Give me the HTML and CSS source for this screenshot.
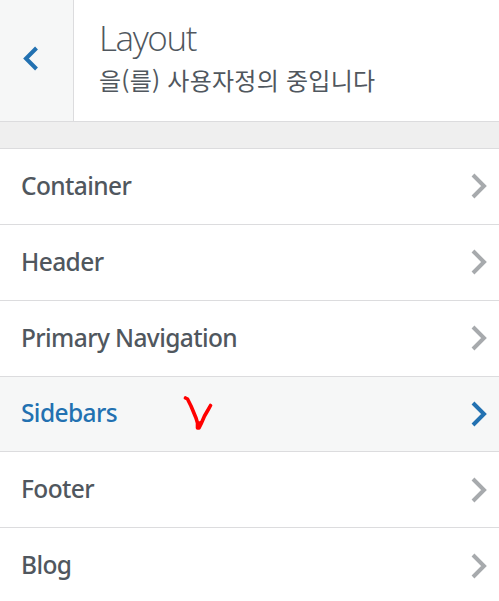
FILE: index.html
```html
<!DOCTYPE html>
<html lang="ko">
    <head>
       <meta charset="utf-8">
       <title>Layout</title>
       <link rel="stylesheet" href="styles.css">
    </head>
    <body>
       <!-- panel header -->
       <div class="header">
          <button class="back" type="button" aria-label="Back">
             <svg width="16" height="26" viewBox="0 0 16 26"><path d="M13.5 2L3 12.5L13.5 23"/></svg>
          </button>
          <div class="heading">
             <h1>Layout</h1>
             <p>을(를) 사용자정의 중입니다</p>
          </div>
       </div>
       <!-- sections -->
       <ul class="sections">
          <li>
             <span>Container</span>
             <svg class="arrow" width="16" height="26" viewBox="0 0 16 26"><path d="M2 2L13 13L2 24"/></svg>
          </li>
          <li>
             <span>Header</span>
             <svg class="arrow" width="16" height="26" viewBox="0 0 16 26"><path d="M2 2L13 13L2 24"/></svg>
          </li>
          <li>
             <span>Primary Navigation</span>
             <svg class="arrow" width="16" height="26" viewBox="0 0 16 26"><path d="M2 2L13 13L2 24"/></svg>
          </li>
          <li class="active">
             <span>Sidebars</span>
             <svg class="mark" width="32" height="36" viewBox="0 0 32 36"><path d="M3.5 2L5.5 3L9 10L14 22L15.5 27V32H17L19 28L22.500 20L26 14L28.5 9.500M15.500 27L18 27"/></svg>
             <svg class="arrow" width="16" height="26" viewBox="0 0 16 26"><path d="M2 2L13 13L2 24"/></svg>
          </li>
          <li>
             <span>Footer</span>
             <svg class="arrow" width="16" height="26" viewBox="0 0 16 26"><path d="M2 2L13 13L2 24"/></svg>
          </li>
          <li>
             <span>Blog</span>
             <svg class="arrow" width="16" height="26" viewBox="0 0 16 26"><path d="M2 2L13 13L2 24"/></svg>
          </li>
       </ul>
    </body>
</html>
```

FILE: styles.css
```css
*
{
   margin: 0;
   padding: 0;
   box-sizing: border-box;
}
body
{
   background-color: #efefef;
   color: #50575e;
   font-family: "Noto Sans", "Noto Sans CJK KR", sans-serif;
   overflow: hidden;
}
svg
{
   display: block;
   fill: none;
}
.header
{
   display: flex;
   height: 122px;
   background-color: #fff;
   border-bottom: 1px solid #dcdcde;
}
.back
{
   display: flex;
   align-items: center;
   width: 74px;
   padding: 0 0 4px 23px;
   background-color: #f6f7f7;
   border: none;
   border-right: 1px solid #dcdcde;
}
.back svg
{
   stroke: #2271b1;
   stroke-width: 4;
}
.heading
{
   padding: 16px 0 0 25px;
}
h1
{
   font-family: "Open Sans", sans-serif;
   font-size: 35px;
   font-weight: 300;
   letter-spacing: -1.4px;
   line-height: 44px;
}
.heading p
{
   font-family: "Noto Sans CJK KR", sans-serif;
   font-size: 24px;
   letter-spacing: 0.25px;
   line-height: 40px;
   white-space: nowrap;
}
.sections
{
   margin-top: 26px;
   list-style: none;
   border-top: 1px solid #dcdcde;
}
.sections li
{
   display: flex;
   align-items: center;
   height: 75.85px;
   padding: 0 12px 0 21px;
   background-color: #fff;
   border-bottom: 1px solid #dcdcde;
   font-size: 24.5px;
   font-weight: 500;
   letter-spacing: -0.6px;
}
.sections span
{
   padding-bottom: 2px;
}
.arrow
{
   margin-left: auto;
   stroke: #a7aaad;
   stroke-width: 4;
}
.sections .active
{
   background-color: #f6f7f7;
   color: #2271b1;
}
.active .arrow
{
   stroke: #2271b1;
}
.mark
{
   margin-left: 65px;
   stroke: #f00;
   stroke-width: 3.6;
   stroke-linecap: round;
   stroke-linejoin: round;
}
```
